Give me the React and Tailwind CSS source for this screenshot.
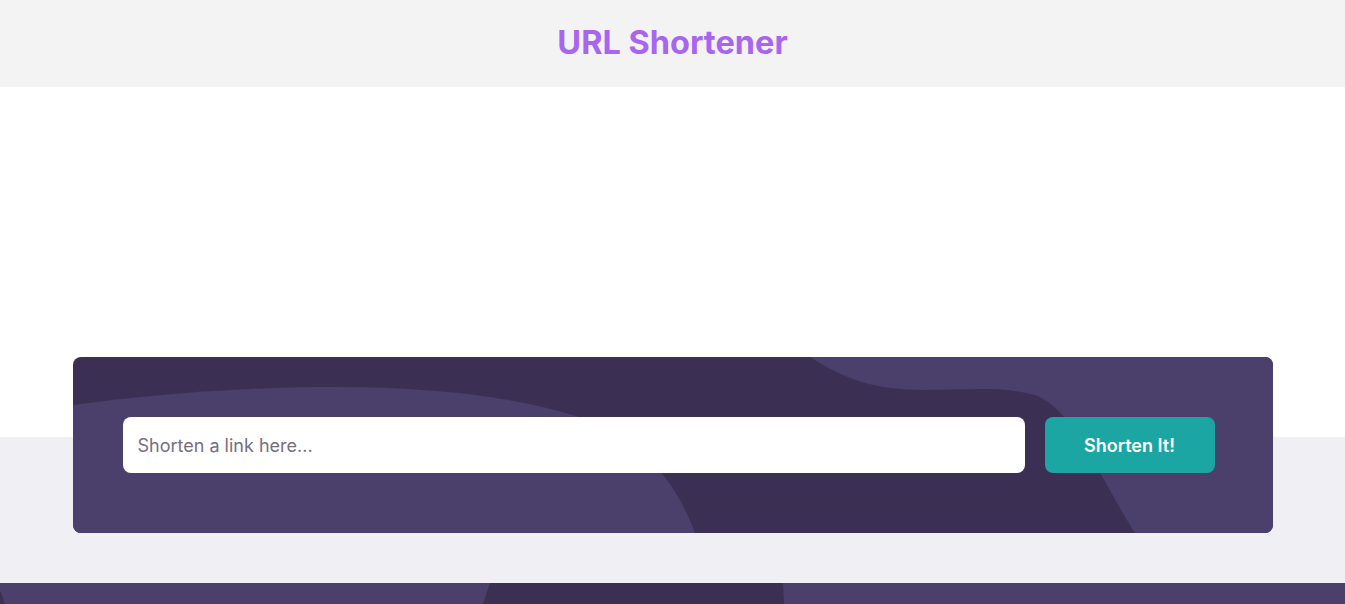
import React from 'react'

function Header() {
  return (
    <header className="flex h-[87px] items-center justify-center bg-[#f3f3f3]">
      <h1 className="text-[32.5px] font-bold tracking-[0px] text-[#a765f0]">URL Shortener</h1>
    </header>
  )
}

function ShortenCard() {
  return (
    <div className="relative mx-auto -mt-[80px] h-[176px] max-w-[1200px] overflow-hidden rounded-lg bg-[#3b3054]">
      {/* background blobs */}
      <svg
        className="absolute inset-0 h-full w-full"
        viewBox="0 0 1200 176"
        preserveAspectRatio="none"
        aria-hidden="true"
      >
        <path
          d="M0 48 C 80 37, 170 30, 262 30 C 370 30, 455 42, 515 63 C 568 84, 602 122, 622 176 L 0 176 Z"
          fill="#4b3f6b"
        />
        <path
          d="M737 0 C 772 22, 800 33, 852 33 C 900 33, 928 29, 962 38 C 1000 52, 1022 112, 1062 176 L 1200 176 L 1200 0 Z"
          fill="#4b3f6b"
        />
      </svg>
      <form
        className="relative flex h-full items-center gap-5 pl-[50px] pr-[58px]"
        onSubmit={(e) => e.preventDefault()}
      >
        <input
          type="text"
          placeholder="Shorten a link here..."
          className="h-14 flex-1 rounded-lg bg-white px-[15px] text-[18px] text-[#34313d] outline-none placeholder:text-[#75707e]"
        />
        <button
          type="submit"
          className="h-14 w-[170px] rounded-lg bg-[#1ba6a4] text-[18px] font-semibold text-white"
        >
          Shorten It!
        </button>
      </form>
    </div>
  )
}

function Footer() {
  return (
    <footer className="relative h-[200px] overflow-hidden bg-[#4b3f6b]">
      <svg
        className="absolute left-0 top-0 h-[200px] w-[1345px]"
        viewBox="0 0 1345 200"
        aria-hidden="true"
      >
        <path d="M490 0 L783 0 C 786 60, 792 140, 800 200 L 420 200 C 440 140, 470 60, 490 0 Z" fill="#3b3054" />
        <path d="M0 8 C 3 14, 5 20, 6 28 L 0 28 Z" fill="#3b3054" />
      </svg>
    </footer>
  )
}

export default function App() {
  return (
    <div className="min-h-screen bg-white font-['Inter','Noto_Sans',sans-serif]">
      <Header />
      <section className="h-[350px] bg-white" />
      <section className="flow-root bg-[#f0eff4] px-[72px] pb-[50px]">
        <ShortenCard />
      </section>
      <Footer />
    </div>
  )
}
